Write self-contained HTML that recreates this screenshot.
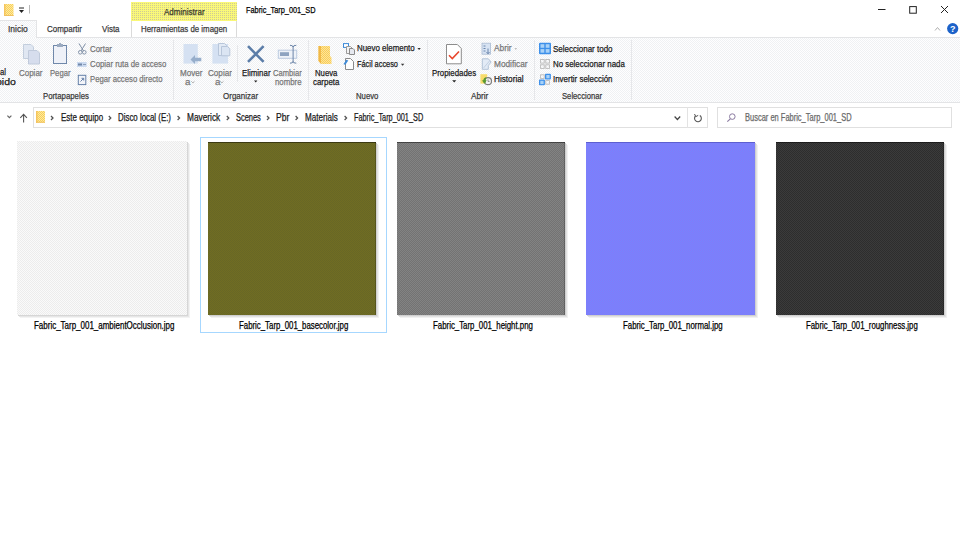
<!DOCTYPE html>
<html><head><meta charset="utf-8"><style>
html,body{margin:0;padding:0;width:960px;height:540px;overflow:hidden;background:#fff;position:relative;font-family:"Liberation Sans",sans-serif}
.t{position:absolute;line-height:10px;white-space:pre;transform-origin:0 0}
.a{position:absolute}
svg{position:absolute;overflow:visible}
.thumb{position:absolute;top:142px;width:168px;height:173px;box-shadow:inset 0 1px 0 rgba(0,0,0,.45),inset -1px 0 0 rgba(0,0,0,.2),1px 1px 0 #cfcfcf,2px 2px 0 #e2e2e2,3px 3px 0 #f1f1f1}

</style></head><body>
<!-- title bar -->
<svg style="left:0;top:0" width="40" height="20"><defs><pattern id="fck" width="2" height="2" patternUnits="userSpaceOnUse"><rect width="2" height="2" fill="#fde9a0"/><rect width="1" height="1" fill="#f8cf5a"/><rect x="1" y="1" width="1" height="1" fill="#f8cf5a"/></pattern></defs>
  <rect x="4" y="4" width="9.5" height="12" fill="url(#fck)"/>
  <rect x="4" y="4" width="1.5" height="12" fill="#f5c55e"/>
  <rect x="4" y="15" width="9.5" height="1" fill="#f0c060"/>
  <rect x="19" y="7.5" width="5" height="1" fill="#222"/>
  <path d="M19 10 h5 l-2.5 3z" fill="#222"/>
  <rect x="29" y="5" width="1" height="8.5" fill="#b8b8b8"/>
</svg>
<svg style="left:860px;top:0" width="100" height="40">
  <rect x="18" y="9" width="7.5" height="1" fill="#222"/>
  <rect x="49.7" y="6.6" width="6.6" height="6.6" fill="none" stroke="#222" stroke-width="1"/>
  <path d="M81 6 L88 13 M88 6 L81 13" stroke="#222" stroke-width="1"/>
  <path d="M75 30.5 L77.5 27.5 L80 30.5" fill="none" stroke="#b0b0b0" stroke-width="1"/>
  <circle cx="92.7" cy="28.6" r="5.6" fill="#1c62c9"/>
  <text x="92.7" y="32" font-family="Liberation Sans" font-weight="bold" font-size="9" fill="#fff" text-anchor="middle">?</text>
</svg>
<!-- contextual tab -->
<div class="a" style="left:131px;top:2px;width:106px;height:19px;background:#faf878 conic-gradient(from 90deg at 1px 1px,#cfcb95 25%,transparent 0) 0 0/2px 2px"></div>
<div class="a" style="left:131px;top:21px;width:0;height:16px;border-left:1px solid #dadada"></div>
<div class="a" style="left:236px;top:21px;width:0;height:16px;border-left:1px solid #dadada"></div>
<!-- ribbon -->
<div class="a" style="left:0;top:20px;width:37px;height:18px;background:repeating-conic-gradient(#fefeff 0 25%,#eff1f3 0 50%) 0 0/2px 2px;border-top:1px solid #e3e4e6;border-right:1px solid #e3e4e6;box-sizing:border-box"></div>
<div class="a" style="left:0;top:37px;width:960px;height:66px;background:repeating-conic-gradient(#fefeff 0 25%,#eff1f3 0 50%) 0 0/2px 2px;border-top:1px solid #e3e4e6;border-bottom:1px solid #e3e4e6;box-sizing:border-box"></div>
<div class="a" style="left:0;top:37px;width:36px;height:1px;background:repeating-conic-gradient(#fefeff 0 25%,#eff1f3 0 50%) 0 0/2px 2px"></div>
<div class="a" style="left:173px;top:40px;width:1px;height:60px;background:#e6e7ea"></div>
<div class="a" style="left:308px;top:40px;width:1px;height:60px;background:#e6e7ea"></div>
<div class="a" style="left:427px;top:40px;width:1px;height:60px;background:#e6e7ea"></div>
<div class="a" style="left:534px;top:40px;width:1px;height:60px;background:#e6e7ea"></div>
<div class="a" style="left:631px;top:40px;width:1px;height:60px;background:#e6e7ea"></div>
<div class="a" style="left:237px;top:45px;width:1px;height:37px;background:#e6e7ea"></div>
<!-- ribbon icons -->
<svg style="left:0;top:0" width="960" height="110"><defs><pattern id="fck2" width="2" height="2" patternUnits="userSpaceOnUse"><rect width="2" height="2" fill="#fde49a"/><rect width="1" height="1" fill="#f9cd58"/><rect x="1" y="1" width="1" height="1" fill="#f9cd58"/></pattern></defs>
  <!-- copy -->
  <path d="M23.5 44.5 h7.5 l2.5 2.5 v11.5 h-10z" fill="#e0e7f2" stroke="#c3cedd"/>
  <path d="M28.5 50.5 h8.5 l2.5 2.5 v11 h-11z" fill="#d6dded" stroke="#c0cadb"/>
  <!-- paste -->
  <rect x="53.5" y="45.5" width="13" height="18" fill="#eef1f8" stroke="#6f88aa" stroke-width="1"/>
  <rect x="57" y="44" width="6" height="3" fill="#9aaac0"/>
  <rect x="59" y="43" width="2" height="2" fill="#9aaac0"/>
  <!-- cut -->
  <path d="M79 43.5 L83.5 51 M85.5 43.5 L81 51" stroke="#8292a8" stroke-width="1"/>
  <circle cx="80.3" cy="52.3" r="1.8" fill="none" stroke="#8292a8"/>
  <circle cx="84.3" cy="52.3" r="1.8" fill="none" stroke="#8292a8"/>
  <!-- copy path -->
  <rect x="77" y="62" width="9.7" height="5" fill="#cbdaf0"/>
  <rect x="78" y="63.5" width="4" height="2" fill="#6f86a8"/>
  <rect x="83" y="64" width="3" height="1" fill="#8ea0ba"/>
  <!-- paste shortcut -->
  <rect x="78.3" y="75.3" width="7.5" height="9.3" fill="#f2f4f9" stroke="#6580a8"/>
  <path d="M80.5 81.5 L83.5 78.5 M81.5 78.3 h2.2 v2.2" stroke="#6580a8" stroke-width="1" fill="none"/>
  <!-- move to -->
  <rect x="183.5" y="44" width="14.3" height="19.6" fill="#d5e1f2"/>
  <path d="M190.5 59.5 L195 55 V57.8 H201.3 V61.2 H195 V64 z" fill="#97aecb"/>
  <!-- copy to -->
  <rect x="212.4" y="44" width="15.7" height="19.6" fill="#d5e1f2"/>
  <path d="M218.5 43.5 h6 l2 2 v10 h-8z" fill="#e2eaf5" stroke="#b8c6da"/>
  <path d="M221.5 46.5 h6 l2.3 2.3 v7 h-8.3z" fill="#dbe5f3" stroke="#b8c6da"/>
  <!-- delete -->
  <path d="M248 46.2 L263.6 61.9 M263.6 46.2 L248 61.9" stroke="#5b7da8" stroke-width="2.6"/>
  <!-- rename -->
  <rect x="278.3" y="50.2" width="18.4" height="8.1" fill="#eef2f8" stroke="#bccbe0"/>
  <rect x="280" y="52.2" width="9" height="3.8" fill="#8ea3c0"/>
  <path d="M293.1 46 V62.5 M290 45.3 Q293.1 45.3 293.1 47 Q293.1 45.3 296.3 45.3 M290 63.2 Q293.1 63.2 293.1 61.5 Q293.1 63.2 296.3 63.2" stroke="#6a84a8" stroke-width="1" fill="none"/>
  <!-- new folder -->
  <path d="M318.5 46 H330 V56 L331.5 57.5 V64 H321.5 L318.5 61z" fill="url(#fck2)"/>
  <path d="M318.5 46 H321 V64 L318.5 61z" fill="#f0b848"/>
  <!-- new item -->
  <rect x="343.5" y="43.6" width="5" height="3.8" fill="#fff" stroke="#3d8bd9" stroke-width="1"/>
  <path d="M346.5 46.5 h4 l1.5 1.5 v5.5 h-5.5z" fill="#f3f3f3" stroke="#9a9a9a"/>
  <path d="M349.5 48.5 h3.5 l1.5 1.5 v4.5 h-5z" fill="#e6e9f0" stroke="#8a8a8a"/>
  <!-- easy access -->
  <path d="M345.5 58.5 h5 l3 3 v8 h-8z" fill="#fdfdfd" stroke="#8a8a8a"/>
  <path d="M343.5 64.3 L346.3 59.8 L348.3 60.5 L345.3 64.8z" fill="#3d8bd9"/>
  <!-- properties -->
  <path d="M446.5 44.5 h10.8 l4 4 v15.3 h-14.8z" fill="#fff" stroke="#8c8c8c"/>
  <path d="M449 55.3 L452.3 58.5 L459 51.5" stroke="#e8472e" stroke-width="1.6" fill="none"/>
  <!-- open -->
  <rect x="482" y="43.2" width="8.5" height="11" fill="#d7e3f3" stroke="#aabbd2" stroke-width="0.8"/>
  <path d="M483.5 46 h2 M483.5 48.5 h2 M483.5 51 h2" stroke="#6b86ad"/>
  <path d="M488 48.5 V53.5 M486.5 52 L488 53.8 L489.5 52" stroke="#6b86ad" fill="none"/>
  <!-- edit -->
  <path d="M482.3 58.8 h6 l2.8 3.2 l-2.8 3.5 v3.8 h-6z" fill="#e3ebf6" stroke="#b3c3d8"/>
  <path d="M483.5 68 L489.5 61" stroke="#c2d0e2" stroke-width="1"/>
  <!-- history -->
  <rect x="480.4" y="74.2" width="6.8" height="9.4" fill="#f8dc6c"/>
  <circle cx="488" cy="81.2" r="3.5" fill="#f4f4f4" stroke="#7e7e7e" stroke-width="1.2"/>
  <path d="M484.6 82.5 A3.5 3.5 0 0 1 486 78" stroke="#5a9a30" stroke-width="1.8" fill="none"/>
  <path d="M481.8 80.6 L485 83.8 L486.6 80z" fill="#5a9a30"/>
  <path d="M488 79.4 V81.4 H489.6" stroke="#777" stroke-width="0.8" fill="none"/>
  <!-- select all -->
  <rect x="539" y="42.7" width="12" height="11.5" rx="1" fill="#3d90ea"/>
  <rect x="540.5" y="44.2" width="3.8" height="3.6" fill="#a9d2f7"/>
  <rect x="545.7" y="44.2" width="3.8" height="3.6" fill="#a9d2f7"/>
  <rect x="540.5" y="49.1" width="3.8" height="3.6" fill="#a9d2f7"/>
  <rect x="545.7" y="49.1" width="3.8" height="3.6" fill="#a9d2f7"/>
  <!-- select none -->
  <g fill="none" stroke="#b9b9b9" stroke-width="0.9">
   <rect x="540.6" y="59.5" width="3.6" height="3.6"/><rect x="545.8" y="59.5" width="3.6" height="3.6"/>
   <rect x="540.6" y="64.8" width="3.6" height="3.6"/><rect x="545.8" y="64.8" width="3.6" height="3.6"/>
  </g>
  <!-- invert -->
  <g fill="none" stroke="#b9b9b9" stroke-width="0.9">
   <rect x="540.6" y="74.8" width="3.6" height="3.6"/><rect x="545.8" y="80.6" width="3.6" height="3.6"/>
  </g>
  <rect x="545" y="73.8" width="5.9" height="5.8" rx="0.8" fill="#3d90ea"/>
  <rect x="539" y="79.5" width="5.9" height="5.8" rx="0.8" fill="#3d90ea"/>
  <rect x="546.3" y="75" width="3.3" height="3.3" fill="#a9d2f7"/>
  <rect x="540.3" y="80.8" width="3.3" height="3.3" fill="#a9d2f7"/>
  <!-- dropdown carets -->
  <path d="M254 80.5 h3.4 l-1.7 1.9z" fill="#222"/>
  <path d="M452.2 80.2 h4 l-2 2.3z" fill="#222"/>
  <path d="M417.4 48 h3.4 l-1.7 1.9z" fill="#333"/>
  <path d="M400.9 63.8 h3.4 l-1.7 1.9z" fill="#333"/>
  <path d="M514.5 48.3 h2.6 l-1.3 1.4z" fill="#aaa"/>
  <path d="M191.3 81.3 l1.6 1.6 l1.6 -1.6" stroke="#9a9a9a" stroke-width="0.8" fill="none"/>
  <path d="M220.3 81.3 l1.6 1.6 l1.6 -1.6" stroke="#9a9a9a" stroke-width="0.8" fill="none"/>
</svg>
<!-- address bar -->
<div class="a" style="left:33px;top:107px;width:675px;height:21px;border:1px solid #e0e0e0;box-sizing:border-box"></div>
<div class="a" style="left:687px;top:107px;width:1px;height:21px;background:#e3e3e3"></div>
<div class="a" style="left:717px;top:107px;width:235px;height:21px;border:1px solid #e0e0e0;box-sizing:border-box"></div>
<svg style="left:0;top:0" width="960" height="140">
  <path d="M7.4 115.6 L9.4 117.6 L11.4 115.6" stroke="#666" stroke-width="1.2" fill="none"/>
  <path d="M23.6 114.5 V122.4 M20.3 117.8 L23.6 114.4 L26.9 117.8" stroke="#555" stroke-width="1.1" fill="none"/>
  <path d="M36 111 H45 V122.7 H36z" fill="url(#fck)"/>
  <path d="M36 111 H37.5 V122.7 H36z" fill="#f5c55e"/>
  <path d="M36 121.7 H45 V122.7 H36z" fill="#f0c060"/>
  <g stroke="#505050" stroke-width="1.25" fill="none">
   <path d="M51 116 L53 118 L51 120"/>
   <path d="M108.8 116 L110.8 118 L108.8 120"/>
   <path d="M177.6 116 L179.6 118 L177.6 120"/>
   <path d="M226.8 116 L228.8 118 L226.8 120"/>
   <path d="M267 116 L269 118 L267 120"/>
   <path d="M295.6 116 L297.6 118 L295.6 120"/>
   <path d="M344.6 116 L346.6 118 L344.6 120"/>
  </g>
  <path d="M674.6 116.5 L677.4 119.5 L680.2 116.5" stroke="#444" stroke-width="1.2" fill="none"/>
  <path d="M699.8 115.5 A3.4 3.4 0 1 1 695.5 116" stroke="#555" stroke-width="1.1" fill="none"/>
  <path d="M694.5 114 L695.8 116.6 L698.2 115.4" stroke="#555" stroke-width="1" fill="none"/>
  <circle cx="732.3" cy="116.6" r="2.8" fill="none" stroke="#8a7aa0" stroke-width="1"/>
  <path d="M730.3 118.8 L727.3 121.6" stroke="#8a7aa0" stroke-width="1.1"/>
</svg>
<!-- thumbnails -->
<div class="a" style="left:200px;top:137px;width:187px;height:196px;border:1px solid #a6d7ff;box-sizing:border-box"></div>
<div class="thumb" style="left:17px;top:141px;width:170px;height:174px;box-shadow:1px 1px 0 #d6d6d6,2px 2px 0 #e6e6e6,3px 3px 0 #f3f3f3;background:repeating-conic-gradient(#fafafa 0 25%,#ececec 0 50%) 0 0/2px 2px"></div>
<div class="thumb" style="left:208px;background:repeating-conic-gradient(#716d22 0 25%,#676726 0 50%) 0 0/2px 2px"></div>
<div class="thumb" style="left:397px;background:repeating-conic-gradient(#838383 0 25%,#737373 0 50%) 0 0/2px 2px"></div>
<div class="thumb" style="left:586px;width:169px;box-shadow:inset 0 1px 0 rgba(0,0,80,.25),1px 1px 0 #cfcfcf,2px 2px 0 #e2e2e2,3px 3px 0 #f1f1f1;background:repeating-conic-gradient(#7287ff 0 25%,#8677f7 0 50%) 0 0/2px 2px"></div>
<div class="thumb" style="left:776px;background:repeating-conic-gradient(#3b3b3b 0 25%,#2d2d2d 0 50%) 0 0/2px 2px"></div>

<div class="t" style="left:246.4px;top:5.1px;font-size:9.75px;color:#000;-webkit-text-stroke:0.25px #000;transform:scaleX(0.754)">Fabric_Tarp_001_SD</div>
<div class="t" style="left:7.9px;top:23.7px;font-size:9.5px;color:#3a3a3a;-webkit-text-stroke:0.25px #3a3a3a;transform:scaleX(0.889)">Inicio</div>
<div class="t" style="left:47.4px;top:23.7px;font-size:9.5px;color:#3a3a3a;-webkit-text-stroke:0.25px #3a3a3a;transform:scaleX(0.839)">Compartir</div>
<div class="t" style="left:102.2px;top:23.7px;font-size:9.5px;color:#3a3a3a;-webkit-text-stroke:0.25px #3a3a3a;transform:scaleX(0.835)">Vista</div>
<div class="t" style="left:163.8px;top:6.9px;font-size:9.5px;color:#3a3a2a;-webkit-text-stroke:0.25px #3a3a2a;transform:scaleX(0.845)">Administrar</div>
<div class="t" style="left:141.2px;top:23.7px;font-size:9.5px;color:#3a3a3a;-webkit-text-stroke:0.25px #3a3a3a;transform:scaleX(0.828)">Herramientas de imagen</div>
<div class="t" style="left:-0.5px;top:67.3px;font-size:9.5px;color:#1a1a1a;-webkit-text-stroke:0.25px #1a1a1a;transform:scaleX(0.808)">al</div>
<div class="t" style="left:-4.5px;top:76.7px;font-size:9.5px;color:#1a1a1a;-webkit-text-stroke:0.25px #1a1a1a;transform:scaleX(1.105)">pido</div>
<div class="t" style="left:19.0px;top:67.8px;font-size:9.5px;color:#777777;-webkit-text-stroke:0.25px #777777;transform:scaleX(0.839)">Copiar</div>
<div class="t" style="left:50.0px;top:67.8px;font-size:9.5px;color:#777777;-webkit-text-stroke:0.25px #777777;transform:scaleX(0.808)">Pegar</div>
<div class="t" style="left:90.1px;top:43.6px;font-size:9.5px;color:#777777;-webkit-text-stroke:0.25px #777777;transform:scaleX(0.829)">Cortar</div>
<div class="t" style="left:90.1px;top:58.8px;font-size:9.5px;color:#777777;-webkit-text-stroke:0.25px #777777;transform:scaleX(0.821)">Copiar ruta de acceso</div>
<div class="t" style="left:90.1px;top:74.3px;font-size:9.5px;color:#777777;-webkit-text-stroke:0.25px #777777;transform:scaleX(0.812)">Pegar acceso directo</div>
<div class="t" style="left:43.4px;top:90.5px;font-size:9.5px;color:#3a3a3a;-webkit-text-stroke:0.25px #3a3a3a;transform:scaleX(0.820)">Portapapeles</div>
<div class="t" style="left:179.5px;top:67.8px;font-size:9.5px;color:#777777;-webkit-text-stroke:0.25px #777777;transform:scaleX(0.849)">Mover</div>
<div class="t" style="left:185.3px;top:76.6px;font-size:9.5px;color:#777777;-webkit-text-stroke:0.25px #777777;transform:scaleX(1.022)">a</div>
<div class="t" style="left:207.9px;top:67.8px;font-size:9.5px;color:#777777;-webkit-text-stroke:0.25px #777777;transform:scaleX(0.854)">Copiar</div>
<div class="t" style="left:214.5px;top:76.6px;font-size:9.5px;color:#777777;-webkit-text-stroke:0.25px #777777;transform:scaleX(1.022)">a</div>
<div class="t" style="left:241.5px;top:67.8px;font-size:9.5px;color:#1a1a1a;-webkit-text-stroke:0.25px #1a1a1a;transform:scaleX(0.831)">Eliminar</div>
<div class="t" style="left:273.3px;top:67.8px;font-size:9.5px;color:#777777;-webkit-text-stroke:0.25px #777777;transform:scaleX(0.799)">Cambiar</div>
<div class="t" style="left:275.3px;top:76.6px;font-size:9.5px;color:#777777;-webkit-text-stroke:0.25px #777777;transform:scaleX(0.822)">nombre</div>
<div class="t" style="left:223.2px;top:90.5px;font-size:9.5px;color:#3a3a3a;-webkit-text-stroke:0.25px #3a3a3a;transform:scaleX(0.841)">Organizar</div>
<div class="t" style="left:315.3px;top:67.8px;font-size:9.5px;color:#1a1a1a;-webkit-text-stroke:0.25px #1a1a1a;transform:scaleX(0.815)">Nueva</div>
<div class="t" style="left:313.1px;top:76.6px;font-size:9.5px;color:#1a1a1a;-webkit-text-stroke:0.25px #1a1a1a;transform:scaleX(0.833)">carpeta</div>
<div class="t" style="left:356.9px;top:43.3px;font-size:9.5px;color:#1a1a1a;-webkit-text-stroke:0.25px #1a1a1a;transform:scaleX(0.833)">Nuevo elemento</div>
<div class="t" style="left:356.9px;top:59.1px;font-size:9.5px;color:#1a1a1a;-webkit-text-stroke:0.25px #1a1a1a;transform:scaleX(0.776)">Fácil acceso</div>
<div class="t" style="left:356.1px;top:90.5px;font-size:9.5px;color:#3a3a3a;-webkit-text-stroke:0.25px #3a3a3a;transform:scaleX(0.815)">Nuevo</div>
<div class="t" style="left:432.3px;top:67.8px;font-size:9.5px;color:#1a1a1a;-webkit-text-stroke:0.25px #1a1a1a;transform:scaleX(0.828)">Propiedades</div>
<div class="t" style="left:493.6px;top:43.2px;font-size:9.5px;color:#777777;-webkit-text-stroke:0.25px #777777;transform:scaleX(0.879)">Abrir</div>
<div class="t" style="left:493.9px;top:58.8px;font-size:9.5px;color:#777777;-webkit-text-stroke:0.25px #777777;transform:scaleX(0.872)">Modificar</div>
<div class="t" style="left:493.9px;top:74.3px;font-size:9.5px;color:#1a1a1a;-webkit-text-stroke:0.25px #1a1a1a;transform:scaleX(0.863)">Historial</div>
<div class="t" style="left:471.2px;top:90.5px;font-size:9.5px;color:#3a3a3a;-webkit-text-stroke:0.25px #3a3a3a;transform:scaleX(0.863)">Abrir</div>
<div class="t" style="left:552.7px;top:43.6px;font-size:9.5px;color:#1a1a1a;-webkit-text-stroke:0.25px #1a1a1a;transform:scaleX(0.841)">Seleccionar todo</div>
<div class="t" style="left:552.7px;top:58.8px;font-size:9.5px;color:#1a1a1a;-webkit-text-stroke:0.25px #1a1a1a;transform:scaleX(0.829)">No seleccionar nada</div>
<div class="t" style="left:552.7px;top:74.3px;font-size:9.5px;color:#1a1a1a;-webkit-text-stroke:0.25px #1a1a1a;transform:scaleX(0.835)">Invertir selección</div>
<div class="t" style="left:562.4px;top:90.5px;font-size:9.5px;color:#3a3a3a;-webkit-text-stroke:0.25px #3a3a3a;transform:scaleX(0.807)">Seleccionar</div>
<div class="t" style="left:60.5px;top:112.7px;font-size:10px;color:#1a1a1a;-webkit-text-stroke:0.25px #1a1a1a;transform:scaleX(0.797)">Este equipo</div>
<div class="t" style="left:118.3px;top:112.7px;font-size:10px;color:#1a1a1a;-webkit-text-stroke:0.25px #1a1a1a;transform:scaleX(0.788)">Disco local (E:)</div>
<div class="t" style="left:187.0px;top:112.7px;font-size:10px;color:#1a1a1a;-webkit-text-stroke:0.25px #1a1a1a;transform:scaleX(0.830)">Maverick</div>
<div class="t" style="left:235.8px;top:112.7px;font-size:10px;color:#1a1a1a;-webkit-text-stroke:0.25px #1a1a1a;transform:scaleX(0.745)">Scenes</div>
<div class="t" style="left:276.0px;top:112.7px;font-size:10px;color:#1a1a1a;-webkit-text-stroke:0.25px #1a1a1a;transform:scaleX(0.852)">Pbr</div>
<div class="t" style="left:305.0px;top:112.7px;font-size:10px;color:#1a1a1a;-webkit-text-stroke:0.25px #1a1a1a;transform:scaleX(0.808)">Materials</div>
<div class="t" style="left:354.0px;top:112.7px;font-size:10px;color:#1a1a1a;-webkit-text-stroke:0.25px #1a1a1a;transform:scaleX(0.732)">Fabric_Tarp_001_SD</div>
<div class="t" style="left:745.0px;top:112.8px;font-size:10px;color:#6a6a6a;-webkit-text-stroke:0.25px #6a6a6a;transform:scaleX(0.749)">Buscar en Fabric_Tarp_001_SD</div>
<div class="t" style="left:34.2px;top:321.1px;font-size:10px;color:#000;-webkit-text-stroke:0.25px #000;transform:scaleX(0.797)">Fabric_Tarp_001_ambientOcclusion.jpg</div>
<div class="t" style="left:239.2px;top:321.1px;font-size:10px;color:#000;-webkit-text-stroke:0.25px #000;transform:scaleX(0.783)">Fabric_Tarp_001_basecolor.jpg</div>
<div class="t" style="left:433.0px;top:321.1px;font-size:10px;color:#000;-webkit-text-stroke:0.25px #000;transform:scaleX(0.785)">Fabric_Tarp_001_height.png</div>
<div class="t" style="left:622.5px;top:321.1px;font-size:10px;color:#000;-webkit-text-stroke:0.25px #000;transform:scaleX(0.783)">Fabric_Tarp_001_normal.jpg</div>
<div class="t" style="left:806.3px;top:321.1px;font-size:10px;color:#000;-webkit-text-stroke:0.25px #000;transform:scaleX(0.779)">Fabric_Tarp_001_roughness.jpg</div>
</body></html>
